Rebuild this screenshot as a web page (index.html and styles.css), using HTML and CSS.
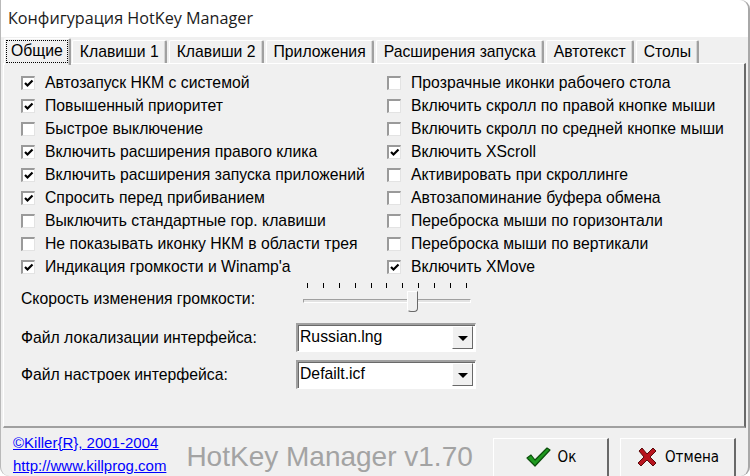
FILE: index.html
```html
<!DOCTYPE html>
<html lang="ru">
<head>
    <meta charset="UTF-8">
    <title>Конфигурация HotKey Manager</title>
    <link rel="stylesheet" href="styles.css">
</head>
<body>

<div class="window">
    <div class="titlebar">Конфигурация HotKey Manager</div>

    <div class="tabs">
        <div class="tab active"><span class="focus">Общие</span></div>
        <div class="tab">Клавиши 1</div>
        <div class="tab">Клавиши 2</div>
        <div class="tab">Приложения</div>
        <div class="tab">Расширения запуска</div>
        <div class="tab">Автотекст</div>
        <div class="tab">Столы</div>
    </div>

    <div class="panel">
        <div class="options">
            <!-- left column -->
            <div class="col">
                <label class="check"><span class="box on"></span>Автозапуск НКМ с системой</label>
                <label class="check"><span class="box on"></span>Повышенный приоритет</label>
                <label class="check"><span class="box"></span>Быстрое выключение</label>
                <label class="check"><span class="box on"></span>Включить расширения правого клика</label>
                <label class="check"><span class="box on"></span>Включить расширения запуска приложений</label>
                <label class="check"><span class="box on"></span>Спросить перед прибиванием</label>
                <label class="check"><span class="box"></span>Выключить стандартные гор. клавиши</label>
                <label class="check"><span class="box"></span>Не показывать иконку НКМ в области трея</label>
                <label class="check"><span class="box on"></span>Индикация громкости и Winamp'a</label>
            </div>
            <!-- right column -->
            <div class="col">
                <label class="check"><span class="box"></span>Прозрачные иконки рабочего стола</label>
                <label class="check"><span class="box"></span>Включить скролл по правой кнопке мыши</label>
                <label class="check"><span class="box"></span>Включить скролл по средней кнопке мыши</label>
                <label class="check"><span class="box on"></span>Включить XScroll</label>
                <label class="check"><span class="box"></span>Активировать при скроллинге</label>
                <label class="check"><span class="box"></span>Автозапоминание буфера обмена</label>
                <label class="check"><span class="box"></span>Переброска мыши по горизонтали</label>
                <label class="check"><span class="box"></span>Переброска мыши по вертикали</label>
                <label class="check"><span class="box on"></span>Включить XMove</label>
            </div>
        </div>

        <div class="field slider-row">
            <span class="field-label">Скорость изменения громкости:</span>
            <div class="slider">
                <div class="ticks">
                    <i></i><i></i><i></i><i></i><i></i><i></i><i></i><i></i><i></i><i></i><i></i>
                </div>
                <div class="track"></div>
                <div class="thumb"></div>
            </div>
        </div>

        <div class="field">
            <span class="field-label">Файл локализации интерфейса:</span>
            <div class="combo"><span class="combo-text">Russian.lng</span><span class="combo-btn"></span></div>
        </div>

        <div class="field">
            <span class="field-label">Файл настроек интерфейса:</span>
            <div class="combo"><span class="combo-text">Defailt.icf</span><span class="combo-btn"></span></div>
        </div>
    </div>

    <div class="footer">
        <div class="links">
            <a href="#">©Killer{R}, 2001-2004</a>
            <a href="#">http://www.killprog.com</a>
        </div>
        <div class="brand">HotKey Manager v1.70</div>
        <div class="buttons">
            <button class="btn">
                <svg width="26" height="22" viewBox="0 0 26 22">
                    <path d="M2 12 L6 9 L10 14 L22 2 L25 4 L10 20 Z" fill="#1f9a1f" stroke="#0b4d0b" stroke-width="1.2" stroke-linejoin="round"/>
                </svg>
                Ок
            </button>
            <button class="btn">
                <svg width="22" height="22" viewBox="0 0 22 22">
                    <path d="M3 5 L6 2 L11 8 L17 2 L20 5 L14 11 L20 17 L17 20 L11 14 L5 20 L2 17 L8 11 Z" fill="#b8141e" stroke="#5a0a0a" stroke-width="1" stroke-linejoin="round"/>
                </svg>
                Отмена
            </button>
        </div>
    </div>
</div>

</body>
</html>
```

FILE: styles.css
```css
* {
    box-sizing: border-box;
}

body {
    margin: 0;
    font-family: "Liberation Sans", Arial, sans-serif;
    font-size: 15.75px;
    color: #000;
    background: #fff;
}

/* Window frame */
.window {
    width: 750px;
    height: 476px;
    overflow: hidden;
    background-color: #f0f0f0;
    border-left: 1px solid #b9b9b9;
    border-right: 2px solid #a8a8a8;
    border-radius: 0 9px 9px 9px;
}

.titlebar {
    height: 37px;
    padding: 7px 0 0 7px;
    background-color: #fff;
    font-family: "Open Sans", "Liberation Sans", sans-serif;
    font-size: 16.2px;
    color: #1b1b1b;
    border-top-right-radius: 9px;
}

/* Tabs */
.tabs {
    display: flex;
    align-items: flex-end;
    height: 26px;
    padding-left: 3px;
}

.tab {
    height: 23px;
    margin-right: 2px;
    padding: 2px 6px 0 7px;
    border-top: 1px solid #fff;
    border-left: 1px solid #fff;
    border-right: 2px solid #a0a0a0;
    border-top-left-radius: 2px;
    border-top-right-radius: 2px;
    box-shadow: inset -1px 0 0 #d4d4d4;
    white-space: nowrap;
}

.tab.active {
    height: 27px;
    padding: 1px 1px 0 1px;
    margin-right: 1px;
    margin-bottom: -2px;
    position: relative;
    background-color: #f0f0f0;
    z-index: 1;
}

.tab .focus {
    display: inline-block;
    padding: 1px 4px 2px 4px;
    border: 1px dotted #000;
    line-height: 18px;
}

/* Tab page */
.panel {
    height: 365px;
    margin: 0 2px 0 2px;
    padding: 7px 0 0 17px;
    border-top: 1px solid #fff;
    border-left: 1px solid #fff;
    border-right: 2px solid #696969;
    border-bottom: 2px solid #a0a0a0;
}

.options {
    display: grid;
    grid-template-columns: 366px 1fr;
}

.check {
    display: flex;
    align-items: center;
    height: 23px;
    white-space: nowrap;
}

.box {
    width: 14px;
    height: 14px;
    margin-right: 10px;
    flex: none;
    background-color: #fff;
    border-top: 2px solid #9a9a9a;
    border-left: 2px solid #9a9a9a;
    border-right: 1px solid #e3e3e3;
    border-bottom: 1px solid #e3e3e3;
}

.box.on {
    background: #fff url("data:image/svg+xml,%3Csvg xmlns='http://www.w3.org/2000/svg' width='11' height='11'%3E%3Cpath d='M2 5 L4.5 7.5 L9.5 2.5' fill='none' stroke='%23000' stroke-width='2.2'/%3E%3C/svg%3E") no-repeat center;
}

/* Slider and combos */
.field {
    display: flex;
    align-items: center;
    height: 37px;
}

.field-label {
    width: 276px;
    flex: none;
}

.slider-row {
    margin-top: 1px;
    height: 40px;
}

.slider {
    position: relative;
    width: 168px;
    height: 36px;
    margin-left: 6px;
}

.ticks {
    display: flex;
    justify-content: space-between;
    padding: 0 4px 0 4px;
    height: 6px;
    margin-top: 2px;
}

.ticks i {
    width: 1px;
    height: 5px;
    background-color: #000;
}

.track {
    margin-top: 10px;
    height: 4px;
    border-top: 1px solid #a0a0a0;
    border-left: 1px solid #a0a0a0;
    border-bottom: 1px solid #fff;
    border-right: 1px solid #fff;
    background-color: #e3e3e3;
}

.thumb {
    position: absolute;
    left: 104px;
    top: 10px;
    width: 11px;
    height: 21px;
    background-color: #f0f0f0;
    border-top: 1px solid #fff;
    border-left: 1px solid #fff;
    border-right: 1px solid #696969;
    border-bottom: 1px solid #696969;
    border-radius: 0 0 4px 4px;
}

.combo {
    display: flex;
    width: 180px;
    height: 29px;
    margin-left: -1px;
    background-color: #fff;
    border-top: 2px solid #a0a0a0;
    border-left: 2px solid #a0a0a0;
    border-right: 1px solid #fff;
    border-bottom: 1px solid #fff;
    box-shadow: inset 1px 1px 0 #696969;
}

.combo-text {
    flex: 1;
    padding: 3px 0 0 2px;
}

.combo-btn {
    width: 21px;
    margin: 1px 2px 2px 0;
    position: relative;
    background-color: #f0f0f0;
    border-top: 1px solid #fff;
    border-left: 1px solid #fff;
    border-right: 1px solid #696969;
    border-bottom: 1px solid #696969;
}

.combo-btn::after {
    content: "";
    position: absolute;
    left: 5px;
    top: 9px;
    border-left: 5px solid transparent;
    border-right: 5px solid transparent;
    border-top: 5px solid #000;
}

/* Footer */
.footer {
    display: flex;
    height: 49px;
    padding: 0 12px 0 12px;
}

.links {
    display: flex;
    flex-direction: column;
    padding-top: 3px;
    line-height: 23px;
    font-size: 15px;
}

.links a {
    color: #0000ff;
}

.brand {
    margin: 13px 0 0 20px;
    font-size: 28px;
    color: #a3a3a3;
    white-space: nowrap;
}

.buttons {
    display: flex;
    gap: 11px;
    margin-left: auto;
    padding-top: 10px;
}

.btn {
    display: flex;
    align-items: center;
    justify-content: center;
    gap: 7px;
    width: 116px;
    height: 42px;
    padding: 0 0 4px 0;
    font-family: "DejaVu Sans Condensed", "DejaVu Sans", sans-serif;
    font-size: 15px;
    background-color: #f0f0f0;
    border-top: 1px solid #fff;
    border-left: 1px solid #fff;
    border-right: 2px solid #696969;
    border-bottom: 2px solid #696969;
}
```
